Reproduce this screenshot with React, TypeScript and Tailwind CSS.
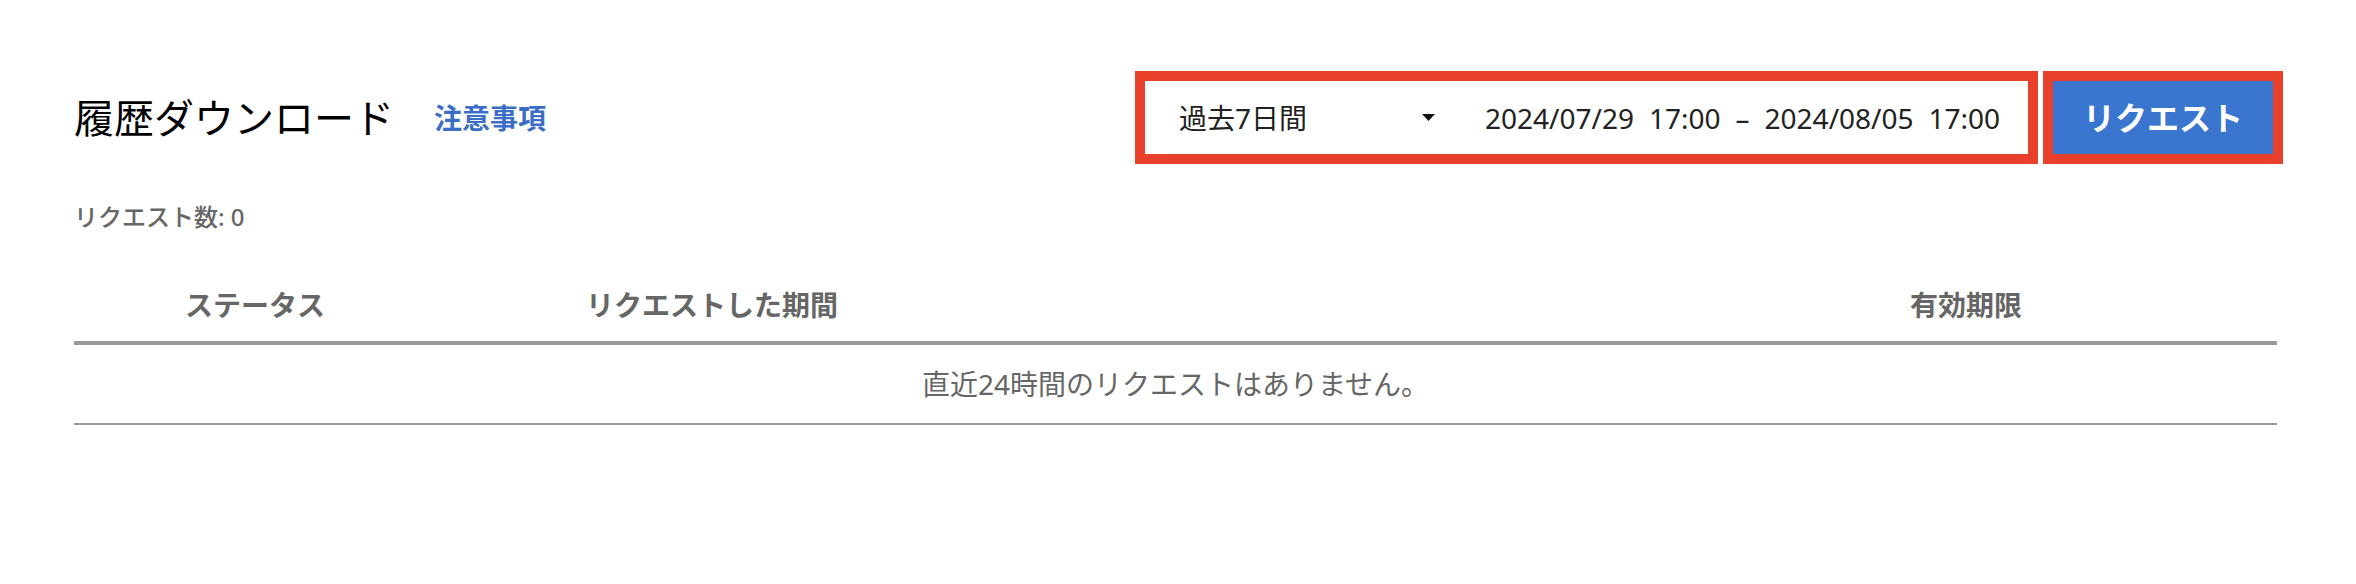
import { useState } from "react";

// Column header labels for the request history table
const columns = [
  { label: "ステータス", className: "w-[362px] text-center" },
  { label: "リクエストした期間", className: "flex-1 pl-[150px]" },
  { label: "有効期限", className: "w-[622px] text-center" },
];

export default function App() {
  const [range] = useState("過去7日間");
  const requests: string[] = [];

  return (
    <div className="min-h-screen bg-white pl-[74px] pr-[73px] pt-[71px] font-['Noto_Sans','Noto_Sans_CJK_JP',sans-serif]">
      {/* Header row */}
      <div className="flex items-center">
        <h1 className="text-[40px] leading-none font-normal text-black">履歴ダウンロード</h1>
        <a href="#" className="ml-[40px] text-[28px] leading-none font-semibold text-[#3b6ec6]">
          注意事項
        </a>

        <div className="ml-auto flex gap-[5px]">
          <div className="h-[93px] w-[903px] border-[10px] border-[#e8402a]">
            <div className="flex h-full items-center pl-[34px] text-[28px] leading-none text-[#222]">
              <div className="flex w-[256px] items-center justify-between">
                <span>{range}</span>
                <svg width="13" height="7" viewBox="0 0 13 7" className="fill-[#111]">
                  <polygon points="0,0 13,0 6.5,7" />
                </svg>
              </div>
              <div className="ml-[50px] flex items-center gap-[15px]">
                <span>2024/07/29</span>
                <span>17:00</span>
                <span>–</span>
                <span>2024/08/05</span>
                <span>17:00</span>
              </div>
            </div>
          </div>
          <button className="h-[93px] w-[240px] border-[10px] border-[#e8402a]">
            <span className="flex h-full items-center justify-center bg-[#3a76cf] text-[32px] leading-none font-bold text-white">
              リクエスト
            </span>
          </button>
        </div>
      </div>

      <p className="mt-[35px] text-[24px] leading-[36px] font-medium text-[#666]">
        リクエスト数: {requests.length}
      </p>

      {/* Table */}
      <div className="mt-[34px] mr-[6px]">
        <div className="flex h-[76px] items-center border-b-4 border-[#999] text-[28px] leading-none font-bold text-[#666]">
          {columns.map((col) => (
            <div key={col.label} className={col.className}>
              {col.label}
            </div>
          ))}
        </div>
        <div className="flex h-[80px] items-center justify-center border-b-2 border-[#999] text-[28px] leading-none text-[#666]">
          直近24時間のリクエストはありません。
        </div>
      </div>
    </div>
  );
}
